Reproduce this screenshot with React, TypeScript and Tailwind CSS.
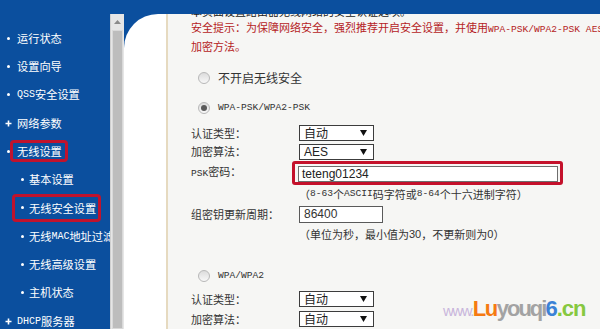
import React from "react"

const cjk = { fontFamily: '"Noto Sans CJK SC", "Noto Sans", sans-serif' }
const mono = { fontFamily: '"Liberation Mono", "DejaVu Sans Mono", monospace' }
const arial = { fontFamily: '"Liberation Sans", Arial, sans-serif' }

function Dot() {
  return <span className="block w-[3px] h-[3px] rounded-full bg-white" />
}

function Plus() {
  return (
    <svg width="7" height="7" viewBox="0 0 7 7" className="block">
      <path d="M3.5 0.5v6M0.5 3.5h6" stroke="#fff" strokeWidth="1.6" />
    </svg>
  )
}

function NavRow({ children }: { children: React.ReactNode }) {
  return <div className="flex items-center h-[28.3px] whitespace-nowrap">{children}</div>
}

function Sidebar() {
  return (
    <div className="w-[110px] shrink-0 overflow-hidden bg-[#0b4f9e] text-white text-[11.2px] pt-[10px]" style={cjk}>
      <NavRow>
        <span className="w-[17px] shrink-0 pl-[7px]"><Dot /></span>运行状态
      </NavRow>
      <NavRow>
        <span className="w-[17px] shrink-0 pl-[7px]"><Dot /></span>设置向导
      </NavRow>
      <NavRow>
        <span className="w-[17px] shrink-0 pl-[7px]"><Dot /></span>
        <span style={mono} className="text-[10px]">QSS</span>安全设置
      </NavRow>
      <NavRow>
        <span className="w-[17px] shrink-0 pl-[5px]"><Plus /></span>网络参数
      </NavRow>
      <NavRow>
        <span className="w-[10px] shrink-0 pl-[7px]"><Dot /></span>
        <span className="border-[3px] border-[#c0132d] rounded-[4px] pl-[4px] pr-[3px] leading-[16px]">无线设置</span>
      </NavRow>
      <NavRow>
        <span className="w-[29px] shrink-0 pl-[21px]"><Dot /></span>基本设置
      </NavRow>
      <NavRow>
        <span className="flex items-center shrink-0 ml-[12px] border-[3px] border-[#c0132d] rounded-[4px] pl-[6px] pr-[2px] leading-[22px]">
          <span className="w-[8px] shrink-0"><Dot /></span>无线安全设置
        </span>
      </NavRow>
      <NavRow>
        <span className="w-[29px] shrink-0 pl-[21px]"><Dot /></span>
        <span className="shrink-0">无线</span>
        <span style={mono} className="text-[10px] shrink-0">MAC</span>
        <span className="shrink-0">地址过滤</span>
      </NavRow>
      <NavRow>
        <span className="w-[29px] shrink-0 pl-[21px]"><Dot /></span>无线高级设置
      </NavRow>
      <NavRow>
        <span className="w-[29px] shrink-0 pl-[21px]"><Dot /></span>主机状态
      </NavRow>
      <NavRow>
        <span className="w-[17px] shrink-0 pl-[5px]"><Plus /></span>
        <span style={mono} className="text-[10px]">DHCP</span>服务器
      </NavRow>
    </div>
  )
}

function Scrollbar() {
  return (
    <div className="w-[14px] shrink-0 flex flex-col bg-[#e6e6e6] border-l border-[#d0d0d0]">
      <div className="h-[16px] flex items-center justify-center">
        <svg width="7" height="4" viewBox="0 0 7 4">
          <path d="M0 4L3.5 0L7 4Z" fill="#8a8a8a" />
        </svg>
      </div>
      <div className="flex-1 mx-[1px] bg-[#bdbdbd] border border-[#d9d9d9]" />
    </div>
  )
}

function Radio({ checked }: { checked?: boolean }) {
  return (
    <span className="w-[12px] h-[12px] rounded-full border border-[#b8b8b8] bg-linear-to-b from-[#dcdcdc] to-[#f8f8f8] flex items-center justify-center">
      {checked && <span className="w-[6px] h-[6px] rounded-full bg-[#5a5a5a]" />}
    </span>
  )
}

function Arrow() {
  return (
    <svg width="7" height="6" viewBox="0 0 7 6" className="block">
      <path d="M0 0H7L3.5 6Z" fill="#111" />
    </svg>
  )
}

function Select({ value, ascii }: { value: string; ascii?: boolean }) {
  return (
    <div className="w-[75px] h-[16px] border border-[#3c3c3c] bg-white flex items-center justify-between pl-[4px] pr-[6px] text-[12px] text-[#222] leading-none">
      <span style={ascii ? arial : cjk}>{value}</span>
      <Arrow />
    </div>
  )
}

function Label({ children }: { children: React.ReactNode }) {
  return <span className="w-[108px] shrink-0">{children}</span>
}

function Content() {
  return (
    <div className="flex-1 overflow-hidden bg-[#f6f6f4] pl-[23px] text-[11px] text-[#333] flex flex-col" style={cjk}>
      {/* scrolled line, only its foot shows under the top bar */}
      <div className="h-[3px] shrink-0 overflow-hidden">
        <div className="-mt-[9px] h-[12px] leading-[12px] whitespace-nowrap text-[#222]">本页面设置路由器无线网络的安全认证选项。</div>
      </div>
      <div className="mt-[2px] leading-[16px] text-[#b51c24] whitespace-nowrap">
        <div>
          安全提示：为保障网络安全，强烈推荐开启安全设置，并使用
          <span style={mono} className="text-[9.6px]">WPA-PSK/WPA2-PSK AES</span>
        </div>
        <div>加密方法。</div>
      </div>
      <div className="mt-[14px] h-[20px] flex items-center pl-[7px] gap-[8px] text-[12px]">
        <Radio />
        <span>不开启无线安全</span>
      </div>
      <div className="mt-[10px] h-[20px] flex items-center pl-[7px] gap-[8px]">
        <Radio checked />
        <span style={mono} className="text-[9.6px]">WPA-PSK/WPA2-PSK</span>
      </div>
      <div className="mt-[5px] h-[20px] flex items-center">
        <Label>认证类型：</Label>
        <Select value="自动" />
      </div>
      <div className="h-[18px] flex items-center">
        <Label>加密算法：</Label>
        <Select value="AES" ascii />
      </div>
      <div className="h-[24px] flex items-center">
        <Label>
          <span style={mono} className="text-[9.6px]">PSK</span>密码：
        </Label>
        <div className="-ml-[7px] w-[271px] h-[24px] border-[3px] border-[#c4112b] rounded-[3px] pt-[2px] pl-[3px] pr-[2px]">
          <div className="h-[16px] bg-white border border-[#6e6e6e] flex items-center pl-[3px] text-[12px] text-[#222]" style={arial}>
            teteng01234
          </div>
        </div>
      </div>
      <div className="h-[20px] flex items-center pl-[108px] whitespace-nowrap">
        （<span style={mono} className="text-[9.6px]">8-63</span>个
        <span style={mono} className="text-[9.6px]">ASCII</span>码字符或
        <span style={mono} className="text-[9.6px]">8-64</span>个十六进制字符）
      </div>
      <div className="h-[20px] flex items-center">
        <Label>组密钥更新周期：</Label>
        <div className="w-[84px] h-[17px] bg-white border border-[#5a5a5a] flex items-center pl-[4px] text-[12px] text-[#333]" style={arial}>
          86400
        </div>
      </div>
      <div className="h-[20px] flex items-center pl-[108px] whitespace-nowrap">
        （单位为秒，最小值为<span style={arial}>30</span>，不更新则为<span style={arial}>0</span>）
      </div>
      <div className="mt-[22px] h-[20px] flex items-center pl-[7px] gap-[8px]">
        <Radio />
        <span style={mono} className="text-[9.6px]">WPA/WPA2</span>
      </div>
      <div className="mt-[3px] h-[20px] flex items-center">
        <Label>认证类型：</Label>
        <Select value="自动" />
      </div>
      <div className="h-[20px] flex items-center">
        <Label>加密算法：</Label>
        <Select value="自动" />
      </div>
    </div>
  )
}

function Watermark() {
  return (
    <div className="absolute left-[443px] top-[298px] flex items-baseline font-bold leading-none whitespace-nowrap" style={arial}>
      <span className="text-[15px] font-normal tracking-[-1.5px] text-[#c9b6dc]">www.</span>
      <span className="text-[22px] tracking-[-1.5px] text-[#f57a12]">Lu</span>
      <span className="text-[22px] tracking-[-2px] text-[#a3a3a3]">youqi</span>
      <span className="text-[22px] tracking-[-1px] text-[#3b82d6]">6</span>
      <span className="text-[22px] tracking-[-1px] text-[#86c840]">.cn</span>
    </div>
  )
}

export default function App() {
  return (
    <div className="relative w-[600px] h-[329px] overflow-hidden bg-[#0b4f9e] flex flex-col">
      <div className="h-[14px] shrink-0 bg-[#0b4f9e]" />
      <div className="flex-1 flex min-h-0">
        <Sidebar />
        <Scrollbar />
        <div className="w-[42px] shrink-0 bg-white rounded-tl-[34px]" />
        <div className="w-[2px] shrink-0 bg-[#e6dac0]" />
        <Content />
      </div>
      <Watermark />
    </div>
  )
}
